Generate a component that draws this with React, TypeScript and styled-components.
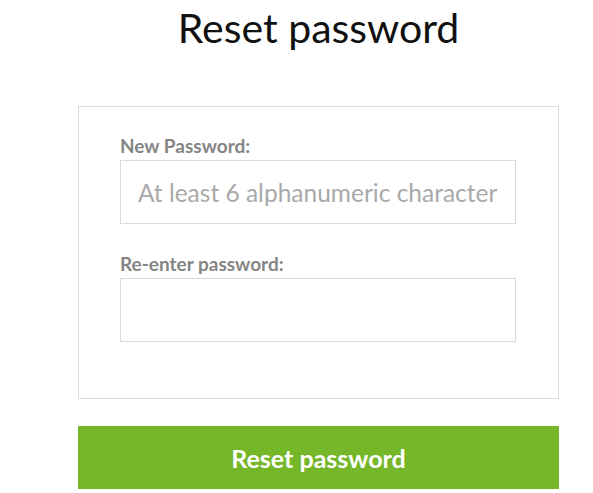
import React from 'react'
import styled, { createGlobalStyle } from 'styled-components'

const Global = createGlobalStyle`
body {
  margin: 0;
  background: #fff;
  font-family: Lato, "Open Sans", sans-serif;
}
`

export default function App() {
    return <Page>
        <Global />
        <Title>Reset password</Title>
        <Card>
            <Field>
                <Label>New Password:</Label>
                <Input type="password" placeholder="At least 6 alphanumeric characters" />
            </Field>
            <Field>
                <Label>Re-enter password:</Label>
                <Input type="password" />
            </Field>
        </Card>
        <Button>Reset password</Button>
    </Page>
}

const Page = styled.div`
display: flex;
flex-direction: column;
width: 481px;
margin-left: 78px;
`

const Title = styled.h1`
margin: 4px 0 0;
font-weight: 400;
font-size: 41px;
line-height: 48px;
text-align: center;
color: #111;
`

const Card = styled.div`
margin-top: 54px;
border: 1px solid #dcdcdc;
padding: 25px 42px 56px 41px;
display: flex;
flex-direction: column;
gap: 26px;
`

const Field = styled.div`
display: flex;
flex-direction: column;
`

const Label = styled.label`
font-weight: 700;
font-size: 19px;
line-height: 28px;
color: #858585;
`

const Input = styled.input`
box-sizing: border-box;
width: 396px;
height: 64px;
border: 1px solid #dadada;
padding: 0 17px;
font-family: Lato, sans-serif;
font-size: 24.5px;
outline: none;
&::placeholder {
  color: #a9a9a9;
}
`

const Button = styled.button`
margin-top: 27px;
height: 63px;
border: none;
background: #76b72a;
color: #fff;
font-family: Lato, sans-serif;
font-weight: 700;
font-size: 25px;
cursor: pointer;
`
